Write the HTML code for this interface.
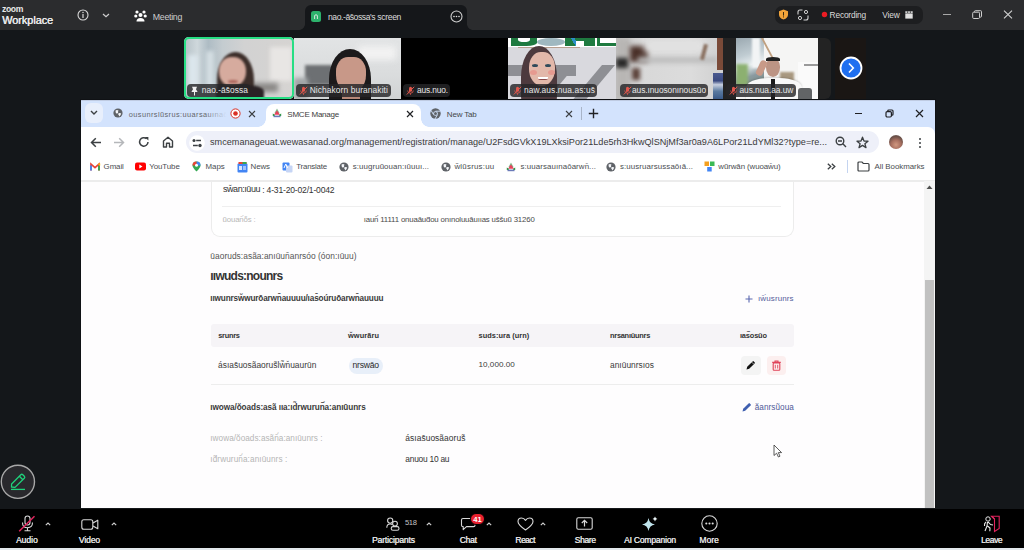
<!DOCTYPE html>
<html><head><meta charset="utf-8"><title>Zoom</title>
<style>
*{margin:0;padding:0;box-sizing:border-box}
html,body{width:1024px;height:550px;overflow:hidden;background:#14171a;font-family:"Liberation Sans",sans-serif}
.a{position:absolute}
.t{position:absolute;white-space:nowrap;font-family:"Liberation Sans",sans-serif}
svg.a{overflow:visible}
</style></head><body>
<div class="a" style="left:0px;top:0px;width:1024px;height:30px;background:#2b2c2e"></div>
<div class="a" style="left:0px;top:30px;width:1024px;height:478px;background:#14171a"></div>
<div class="t" style="left:2px;top:5.09px;font-size:8.6px;line-height:8.6px;color:#e8e8e8;font-weight:700;letter-spacing:-0.359px;">zoom</div>
<div class="t" style="left:2px;top:14.54px;font-size:10.9px;line-height:10.9px;color:#ececec;font-weight:400;letter-spacing:-0.028px;text-shadow:0.4px 0 0 #ececec;">Workplace</div>
<svg class="a" style="left:77px;top:9px;" width="12" height="12" viewBox="0 0 12 12"><circle cx="6" cy="6" r="5" fill="none" stroke="#d8d8d8" stroke-width="1.1"/><rect x="5.4" y="5" width="1.2" height="4" fill="#d8d8d8"/><circle cx="6" cy="3.4" r="0.75" fill="#d8d8d8"/></svg>
<svg class="a" style="left:102px;top:13px;" width="8" height="5" viewBox="0 0 8 5"><path d="M1 1 L4 3.8 L7 1" fill="none" stroke="#cfcfcf" stroke-width="1.2"/></svg>
<svg class="a" style="left:134px;top:10px;" width="13" height="12" viewBox="0 0 13 12"><circle cx="3" cy="2" r="1.6" fill="#fff"/><circle cx="10" cy="2" r="1.6" fill="#fff"/><circle cx="1.8" cy="6" r="1.6" fill="#fff"/><circle cx="11.2" cy="6" r="1.6" fill="#fff"/><circle cx="6.5" cy="5" r="2" fill="#fff"/><path d="M2.5 11.5 Q2.5 8 6.5 8 Q10.5 8 10.5 11.5 Z" fill="#fff"/></svg>
<div class="t" style="left:152.8px;top:13.02px;font-size:8.8px;line-height:8.8px;color:#cdcdcd;font-weight:400;letter-spacing:-0.300px;">Meeting</div>
<div class="a" style="left:305px;top:5px;width:162px;height:25px;background:#15171a;border-radius:6px 6px 0 0"></div>
<div class="a" style="left:299px;top:24px;width:6px;height:6px;background:radial-gradient(circle at 0 0,#2b2c2e 5.5px,#15171a 6.2px)"></div>
<div class="a" style="left:467px;top:24px;width:6px;height:6px;background:radial-gradient(circle at 6px 0,#2b2c2e 5.5px,#15171a 6.2px)"></div>
<div class="a" style="left:311px;top:11px;width:10px;height:11px;background:#2db26c;border-radius:2.5px"></div>
<svg class="a" style="left:311px;top:11px;" width="10" height="11" viewBox="0 0 10 11"><path d="M3.6 8 V5 Q3.6 3.8 5 3.8 Q6.4 3.8 6.4 5 V8" fill="none" stroke="#e8e8e8" stroke-width="0.9"/></svg>
<div class="t" style="left:328px;top:13.09px;font-size:8.6px;line-height:8.6px;color:#dcdcdc;font-weight:400;letter-spacing:-0.439px;">nao.-ās̄ossa</div>
<div class="t" style="left:370px;top:13.09px;font-size:8.6px;line-height:8.6px;color:#dcdcdc;font-weight:400;letter-spacing:-0.347px;">'s screen</div>
<svg class="a" style="left:450px;top:10px;" width="13" height="13" viewBox="0 0 13 13"><circle cx="6.5" cy="6.5" r="5.5" fill="none" stroke="#cfcfcf" stroke-width="1.1"/><circle cx="4" cy="6.5" r="0.8" fill="#ddd"/><circle cx="6.5" cy="6.5" r="0.8" fill="#ddd"/><circle cx="9" cy="6.5" r="0.8" fill="#ddd"/></svg>
<div class="a" style="left:775px;top:6px;width:148px;height:18px;background:#1d1e20;border-radius:7px"></div>
<svg class="a" style="left:778px;top:9px;" width="11" height="11" viewBox="0 0 11 11"><path d="M5.5 0.5 L10 2.3 V5.5 Q10 9 5.5 10.5 Q1 9 1 5.5 V2.3 Z" fill="#f2a43a"/><rect x="5" y="3" width="1" height="3.6" fill="#3a2a10"/><rect x="5" y="7.4" width="1" height="1" fill="#3a2a10"/></svg>
<svg class="a" style="left:797px;top:9px;" width="12" height="12" viewBox="0 0 12 12"><path d="M1 5.5 V3 Q1 1 3 1 H5.5 M6.5 11 H9 Q11 11 11 9 V6.5" fill="none" stroke="#d0d0d0" stroke-width="1.1"/><circle cx="9" cy="3" r="1.6" fill="none" stroke="#d0d0d0" stroke-width="1"/><circle cx="3" cy="9" r="1.6" fill="none" stroke="#d0d0d0" stroke-width="1"/></svg>
<svg class="a" style="left:821px;top:11px;" width="7" height="7" viewBox="0 0 7 7"><circle cx="3.5" cy="3.5" r="2.7" fill="#ec1c24"/></svg>
<div class="t" style="left:829.6px;top:10.76px;font-size:8.4px;line-height:8.4px;color:#dcdcdc;font-weight:400;letter-spacing:-0.199px;">Recording</div>
<div class="t" style="left:882.3px;top:10.76px;font-size:8.4px;line-height:8.4px;color:#dcdcdc;font-weight:400;letter-spacing:-0.204px;">View</div>
<svg class="a" style="left:904.5px;top:10.8px;" width="8" height="8" viewBox="0 0 8 8"><rect x="0.3" y="2.4" width="7.4" height="5.2" fill="#e0e0e0"/><rect x="0.3" y="0.3" width="7.4" height="1.6" fill="#e0e0e0"/><rect x="2.3" y="0.3" width="0.8" height="1.6" fill="#1d1e20"/><rect x="4.9" y="0.3" width="0.8" height="1.6" fill="#1d1e20"/></svg>
<div class="a" style="left:943px;top:13.5px;width:8px;height:1.0999999999999996px;background:#a8a8a8"></div>
<svg class="a" style="left:972px;top:10px;" width="11" height="9" viewBox="0 0 11 9"><rect x="0.7" y="2.2" width="6.8" height="6.3" rx="1" fill="none" stroke="#cfcfcf" stroke-width="1"/><path d="M2.5 2 V1.5 Q2.5 0.7 3.3 0.7 H8.7 Q9.5 0.7 9.5 1.5 V6.3 Q9.5 7.1 8.7 7.1 H8" fill="none" stroke="#cfcfcf" stroke-width="1"/></svg>
<svg class="a" style="left:1003px;top:10px;" width="10" height="9" viewBox="0 0 10 9"><path d="M1 0.7 L9 8.3 M9 0.7 L1 8.3" stroke="#d6d6d6" stroke-width="1.1"/></svg>
<div class="a" style="left:184px;top:37px;width:110px;height:62px;background:linear-gradient(90deg,#b9c4c8 0%,#d0d4d6 30%,#dcdcdc 55%,#d9d7d5 100%);border-radius:5px;overflow:hidden"></div>
<div class="a" style="left:184px;top:37px;width:110px;height:62px;border-radius:5px;overflow:hidden;background:linear-gradient(90deg,#b4c0c6 0%,#cfd8dc 12%,#aebcc4 22%,#c4ccd0 35%,#d2d2d2 55%,#d6d4d2 100%)"><div class="a" style="left:4px;top:18px;width:10px;height:36px;background:#dbe6ec;filter:blur(2px)"></div><div class="a" style="left:22px;top:14px;width:8px;height:38px;background:#d4dee2;filter:blur(2px)"></div><div class="a" style="left:86px;top:10px;width:22px;height:34px;background:#e8e6e4;filter:blur(2px)"></div><div class="a" style="left:68px;top:46px;width:26px;height:9px;background:#8a8886;filter:blur(2.5px)"></div><div class="a" style="left:33px;top:15px;width:37px;height:55px;background:#3c2e2a;border-radius:50% 50% 30% 30%;filter:blur(0.8px)"></div><div class="a" style="left:35px;top:20px;width:27px;height:30px;background:#d6ab9e;border-radius:45% 45% 50% 50%;filter:blur(0.8px)"></div><div class="a" style="left:44px;top:43px;width:10px;height:3px;background:#a86058;border-radius:50%;filter:blur(0.8px)"></div><div class="a" style="left:32px;top:48px;width:48px;height:16px;background:#2a2224;border-radius:40% 40% 0 0;filter:blur(1px)"></div></div>
<div class="a" style="left:184px;top:37px;width:110px;height:62px;border:2px solid #27de84;border-radius:5px"></div>
<div class="a" style="left:187px;top:84px;width:63px;height:12.5px;background:rgba(38,38,40,0.82);border-radius:4px"></div>
<svg class="a" style="left:190px;top:86px;" width="9" height="10" viewBox="0 0 9 10"><path d="M2 0.8 L7 0.8 L6 3.2 L7.6 6 H5 V9.5 H4 V6 H1.4 L3 3.2 Z" fill="#f0f0f0"/></svg>
<div class="t" style="left:201.7px;top:86.46px;font-size:8.4px;line-height:8.4px;color:#e8e8e8;font-weight:400;letter-spacing:0.061px;">nao.-ās̄ossa</div>
<div class="a" style="left:294px;top:38px;width:107px;height:61px;overflow:hidden;background:linear-gradient(180deg,#e2e4e5 0%,#dadcdd 60%,#d0d3d4 100%)"><div class="a" style="left:11px;top:27px;width:28px;height:20px;background:#6d7073;filter:blur(1.5px)"></div><div class="a" style="left:0px;top:40px;width:14px;height:21px;background:#a0a4a6;filter:blur(2px)"></div><div class="a" style="left:64px;top:8px;width:38px;height:14px;background:#f2f2f2;filter:blur(3px)"></div><div class="a" style="left:35px;top:11px;width:42px;height:60px;background:#1c1a1b;border-radius:50% 50% 15% 15%;filter:blur(0.6px)"></div><div class="a" style="left:42px;top:19px;width:30px;height:36px;background:#c89888;border-radius:40% 40% 50% 50%;filter:blur(0.6px)"></div><div class="a" style="left:48px;top:50px;width:18px;height:12px;background:#b88878;filter:blur(0.6px)"></div></div>
<div class="a" style="left:295.7px;top:83.5px;width:94.90000000000003px;height:13.5px;background:rgba(38,38,40,0.82);border-radius:4px"></div>
<svg class="a" style="left:298.7px;top:85.5px;" width="9" height="9" viewBox="0 0 9 9"><rect x="3" y="0.8" width="3" height="5" rx="1.5" fill="#e2574c"/><path d="M1.7 4.5 Q1.7 7.2 4.5 7.2 Q7.3 7.2 7.3 4.5 M4.5 7.2 V8.8" fill="none" stroke="#e2574c" stroke-width="0.8"/><path d="M0.8 8.5 L8.2 0.8" stroke="#e2574c" stroke-width="1"/></svg>
<div class="t" style="left:309.7px;top:85.96px;font-size:8.4px;line-height:8.4px;color:#e8e8e8;font-weight:400;letter-spacing:0.097px;">Nichakorn buranakiti</div>
<div class="a" style="left:401px;top:38px;width:107px;height:61px;background:#000"></div>
<div class="a" style="left:403px;top:84px;width:46.69999999999999px;height:13px;background:rgba(38,38,40,0.82);border-radius:4px"></div>
<svg class="a" style="left:406px;top:86px;" width="9" height="9" viewBox="0 0 9 9"><rect x="3" y="0.8" width="3" height="5" rx="1.5" fill="#e2574c"/><path d="M1.7 4.5 Q1.7 7.2 4.5 7.2 Q7.3 7.2 7.3 4.5 M4.5 7.2 V8.8" fill="none" stroke="#e2574c" stroke-width="0.8"/><path d="M0.8 8.5 L8.2 0.8" stroke="#e2574c" stroke-width="1"/></svg>
<div class="t" style="left:417px;top:86.46px;font-size:8.4px;line-height:8.4px;color:#e8e8e8;font-weight:400;letter-spacing:-0.143px;">aus.nuo.</div>
<div class="a" style="left:508px;top:38px;width:108px;height:61px;overflow:hidden;background:#d9d9de"><div class="a" style="left:0px;top:0px;width:108px;height:9px;background:#fff"></div><div class="a" style="left:3px;top:0px;width:26px;height:8px;background:#1e7a40;border-radius:0 0 40% 0"></div><div class="a" style="left:10px;top:0px;width:12px;height:4px;background:#fff;border-radius:0 0 50% 50%"></div><div class="a" style="left:29px;top:0px;width:28px;height:8px;background:#9fb8c0;border-radius:50%"></div><div class="a" style="left:57px;top:0px;width:30px;height:8px;background:linear-gradient(60deg,#1e7a40 30%,#2a8fc8 30%,#2a8fc8 40%,#1e7a40 40%)"></div><div class="a" style="left:68px;top:3px;width:8px;height:5px;background:#fff"></div><div class="a" style="left:89px;top:0px;width:19px;height:8px;background:#1e7a40"></div><div class="a" style="left:92px;top:0px;width:16px;height:5px;background:#fff"></div><div class="a" style="left:10px;top:9px;width:62px;height:1px;background:#b8a090"></div><div class="a" style="left:0px;top:27px;width:68px;height:11px;background:#8e8f94"></div><div class="a" style="left:54px;top:27px;width:14px;height:40px;background:#8e8f94;transform:skewX(-40deg);transform-origin:0 0"></div><div class="a" style="left:94px;top:27px;width:13px;height:40px;background:#8e8f94;transform:skewX(-40deg);transform-origin:0 0"></div><div class="a" style="left:13px;top:8px;width:36px;height:62px;background:#4d3a3e;border-radius:50% 50% 20% 20%"></div><div class="a" style="left:21px;top:14px;width:26px;height:34px;background:#e2b8aa;border-radius:45% 45% 50% 50%"></div><div class="a" style="left:22px;top:32px;width:7px;height:5px;background:#e69a90;border-radius:50%"></div><div class="a" style="left:40px;top:32px;width:7px;height:5px;background:#e69a90;border-radius:50%"></div><div class="a" style="left:24px;top:26px;width:6px;height:3px;background:#2f4a5a;border-radius:50%"></div><div class="a" style="left:37px;top:26px;width:6px;height:3px;background:#2f4a5a;border-radius:50%"></div><div class="a" style="left:30px;top:39px;width:10px;height:3px;background:#fff;border-radius:0 0 50% 50%;border-bottom:1px solid #8a4a4a"></div></div>
<div class="a" style="left:510px;top:84px;width:87px;height:13px;background:rgba(38,38,40,0.82);border-radius:4px"></div>
<svg class="a" style="left:513px;top:86px;" width="9" height="9" viewBox="0 0 9 9"><rect x="3" y="0.8" width="3" height="5" rx="1.5" fill="#e2574c"/><path d="M1.7 4.5 Q1.7 7.2 4.5 7.2 Q7.3 7.2 7.3 4.5 M4.5 7.2 V8.8" fill="none" stroke="#e2574c" stroke-width="0.8"/><path d="M0.8 8.5 L8.2 0.8" stroke="#e2574c" stroke-width="1"/></svg>
<div class="t" style="left:524px;top:86.46px;font-size:8.4px;line-height:8.4px;color:#e8e8e8;font-weight:400;letter-spacing:0.095px;">naw.aus.nua.as:us̄</div>
<div class="a" style="left:616px;top:38px;width:107px;height:61px;overflow:hidden;background:linear-gradient(90deg,#c4c4c4 0%,#d8d8d8 25%,#dcdcdc 70%,#d0d0d0 100%)"><div class="a" style="left:0px;top:0px;width:14px;height:61px;background:#b8b6b4;filter:blur(2px)"></div><div class="a" style="left:0px;top:20px;width:12px;height:10px;background:#2a2a2a;filter:blur(2px)"></div><div class="a" style="left:14px;top:8px;width:18px;height:16px;background:#4a3028;filter:blur(2.5px)"></div><div class="a" style="left:16px;top:30px;width:8px;height:12px;background:#5a4038;filter:blur(2px)"></div><div class="a" style="left:22px;top:19px;width:80px;height:6px;background:#bcbcbc;filter:blur(2.5px)"></div><div class="a" style="left:28px;top:2px;width:60px;height:12px;background:#e2e2e2;filter:blur(3px)"></div><div class="a" style="left:86px;top:6px;width:4px;height:16px;background:#8a7060;filter:blur(1.2px);transform:rotate(15deg)"></div><div class="a" style="left:101px;top:0px;width:6px;height:32px;background:#7a4a38;filter:blur(0.6px)"></div><div class="a" style="left:97px;top:35px;width:10px;height:26px;background:linear-gradient(180deg,#4a5a90 0%,#3a4a80 30%,#c8d0e0 45%,#5a7aa0 70%,#3a5a88 100%)"></div></div>
<div class="a" style="left:619.5px;top:84px;width:88.5px;height:13px;background:rgba(38,38,40,0.82);border-radius:4px"></div>
<svg class="a" style="left:622.5px;top:86px;" width="9" height="9" viewBox="0 0 9 9"><rect x="3" y="0.8" width="3" height="5" rx="1.5" fill="#e2574c"/><path d="M1.7 4.5 Q1.7 7.2 4.5 7.2 Q7.3 7.2 7.3 4.5 M4.5 7.2 V8.8" fill="none" stroke="#e2574c" stroke-width="0.8"/><path d="M0.8 8.5 L8.2 0.8" stroke="#e2574c" stroke-width="1"/></svg>
<div class="t" style="left:632px;top:86.46px;font-size:8.4px;line-height:8.4px;color:#e8e8e8;font-weight:400;letter-spacing:-0.080px;">aus.ınuosonınousūo</div>
<div class="a" style="left:723px;top:38px;width:108px;height:61px;background:#232323;border-radius:0 6px 6px 0"></div>
<div class="a" style="left:736px;top:38px;width:82px;height:61px;overflow:hidden;background:#f5f5f4"><div class="a" style="left:0px;top:0px;width:28px;height:48px;background:linear-gradient(160deg,#9aa8b0 0%,#c0ccd2 35%,#e8eef0 55%,#8a9aa0 75%,#7a8a80 100%)"></div><div class="a" style="left:0px;top:26px;width:12px;height:22px;background:#8cb070;filter:blur(1.5px)"></div><div class="a" style="left:16px;top:0px;width:8px;height:30px;background:#f2f4f5;filter:blur(1px)"></div><div class="a" style="left:25px;top:0px;width:2px;height:24px;background:#c0a080;transform:skewX(28deg);transform-origin:0 0"></div><div class="a" style="left:62px;top:24px;width:20px;height:37px;background:#fafafa"></div><div class="a" style="left:68px;top:26px;width:14px;height:2px;background:#9a9a9a"></div><div class="a" style="left:44px;top:34px;width:14px;height:18px;background:#a89880;filter:blur(0.8px)"></div><div class="a" style="left:10px;top:40px;width:56px;height:24px;background:#f8f8f8;border-radius:40% 40% 0 0;box-shadow:0 -1px 2px rgba(0,0,0,.15)"></div><div class="a" style="left:30px;top:20px;width:14px;height:19px;background:#bc9484;border-radius:45% 45% 50% 50%"></div><div class="a" style="left:30px;top:19px;width:14px;height:4px;background:#222;border-radius:50% 50% 0 0"></div><div class="a" style="left:22px;top:22px;width:7px;height:16px;background:#c89a88;transform:rotate(25deg);border-radius:3px"></div><div class="a" style="left:35px;top:41px;width:4px;height:20px;background:#1a1a1a"></div><div class="a" style="left:62px;top:50px;width:14px;height:11px;background:#626466;border-radius:3px 3px 0 0"></div></div>
<div class="a" style="left:725.5px;top:84px;width:70.5px;height:13px;background:rgba(38,38,40,0.82);border-radius:4px"></div>
<svg class="a" style="left:728.5px;top:86px;" width="9" height="9" viewBox="0 0 9 9"><rect x="3" y="0.8" width="3" height="5" rx="1.5" fill="#e2574c"/><path d="M1.7 4.5 Q1.7 7.2 4.5 7.2 Q7.3 7.2 7.3 4.5 M4.5 7.2 V8.8" fill="none" stroke="#e2574c" stroke-width="0.8"/><path d="M0.8 8.5 L8.2 0.8" stroke="#e2574c" stroke-width="1"/></svg>
<div class="t" style="left:739.5px;top:86.46px;font-size:8.4px;line-height:8.4px;color:#e8e8e8;font-weight:400;letter-spacing:-0.053px;">aus.nua.aa.uw</div>
<div class="a" style="left:835px;top:38px;width:31px;height:61px;background:#1a1614"></div>
<svg class="a" style="left:839px;top:56px;" width="24" height="24" viewBox="0 0 24 24"><circle cx="12" cy="12" r="10.5" fill="#1f6ff0" stroke="#fff" stroke-width="1.8"/><path d="M10 7.5 L14.3 12 L10 16.5" fill="none" stroke="#fff" stroke-width="1.6"/></svg>
<div class="a" style="left:80px;top:99px;width:856px;height:409px;background:#101215"></div>
<div class="a" style="left:81px;top:100px;width:854px;height:34px;background:#d3e3fd"></div>
<div class="a" style="left:81px;top:100px;width:854px;height:1px;background:#bfcbe2"></div>
<div class="a" style="left:85px;top:103px;width:18px;height:20px;background:#e8effc;border-radius:6px"></div>
<svg class="a" style="left:90px;top:110px;" width="8" height="5" viewBox="0 0 8 5"><path d="M1 1 L4 4 L7 1" fill="none" stroke="#3c4043" stroke-width="1.4"/></svg>
<svg class="a" style="left:113px;top:108px;" width="10" height="10" viewBox="0 0 10 10"><g transform="scale(1.0)"><circle cx="5" cy="5" r="4.6" fill="#5f6368"/><path d="M2.6 2.4 Q4.4 1.4 5.6 2.8 Q4.4 3.8 5.2 4.8 Q4.6 5.8 3.4 5.4 Q2.2 4.2 2.6 2.4 Z M5.4 5.2 Q7.4 4.6 8.2 5.6 Q7.8 7.6 6 8.4 Q6.2 7 5.2 6.4 Z" fill="#f4f6fa"/></g></svg>
<div class="t" style="left:128.8px;top:110.51px;font-size:7.4px;line-height:7.4px;color:#63666a;font-weight:400;letter-spacing:0.402px;">ousunrslũsrus:uuarsauınaō</div>
<div class="a" style="left:205px;top:105px;width:24px;height:17px;background:linear-gradient(90deg,rgba(211,227,253,0) 0%,#d3e3fd 90%)"></div>
<svg class="a" style="left:230px;top:108px;" width="11" height="11" viewBox="0 0 11 11"><circle cx="5.5" cy="5.5" r="4.6" fill="#fff" stroke="#d93025" stroke-width="1"/><circle cx="5.5" cy="5.5" r="2.3" fill="#d93025"/></svg>
<svg class="a" style="left:247.5px;top:109.5px;" width="8" height="8" viewBox="0 0 8 8"><path d="M1 1 L7 7 M7 1 L1 7" stroke="#3c4043" stroke-width="1.1"/></svg>
<div class="a" style="left:266px;top:104px;width:155px;height:23px;background:#fff;border-radius:8px 8px 0 0"></div>
<div class="a" style="left:258px;top:119px;width:8px;height:8px;background:radial-gradient(circle at 0 0,#d3e3fd 7.5px,#fff 8px)"></div>
<div class="a" style="left:421px;top:119px;width:8px;height:8px;background:radial-gradient(circle at 8px 0,#d3e3fd 7.5px,#fff 8px)"></div>
<svg class="a" style="left:271.6px;top:108px;" width="10" height="10" viewBox="0 0 10 10"><path d="M5 0.5 L7.5 5 H2.5 Z" fill="#4a9a5a" opacity=".7"/><path d="M5 2.5 L8 6.8 H2 Z" fill="#e8405a"/><path d="M0.8 5.5 L2.8 6.8 V8 H0.8 Z M9.2 5.5 L7.2 6.8 V8 H9.2 Z" fill="#2a9a40"/><rect x="1.5" y="7.6" width="7" height="1.6" fill="#6a7ab8"/></svg>
<div class="t" style="left:287.3px;top:110.80px;font-size:8px;line-height:8px;color:#3c3c3c;font-weight:400;letter-spacing:-0.232px;">SMCE Manage</div>
<svg class="a" style="left:406px;top:109.5px;" width="8" height="8" viewBox="0 0 8 8"><path d="M1 1 L7 7 M7 1 L1 7" stroke="#202124" stroke-width="1.2"/></svg>
<svg class="a" style="left:430px;top:108px;" width="11" height="11" viewBox="0 0 11 11"><circle cx="5.5" cy="5.5" r="5.2" fill="#5f6368"/><circle cx="5.5" cy="5.5" r="2.3" fill="#d3e3fd"/><circle cx="5.5" cy="5.5" r="1.5" fill="#5f6368"/><path d="M5.5 3.2 H10.5" stroke="#d3e3fd" stroke-width="0.9"/><path d="M3.5 6.6 L1 2.3" stroke="#d3e3fd" stroke-width="0.9"/><path d="M7.5 6.6 L5 11" stroke="#d3e3fd" stroke-width="0.9"/></svg>
<div class="t" style="left:446.8px;top:110.80px;font-size:8px;line-height:8px;color:#45474a;font-weight:400;letter-spacing:-0.183px;">New Tab</div>
<svg class="a" style="left:565px;top:109.5px;" width="8" height="8" viewBox="0 0 8 8"><path d="M1 1 L7 7 M7 1 L1 7" stroke="#3c4043" stroke-width="1.1"/></svg>
<div class="a" style="left:581px;top:107px;width:1px;height:13px;background:#a8b4c8"></div>
<svg class="a" style="left:588px;top:108px;" width="11" height="11" viewBox="0 0 11 11"><path d="M5.5 0.8 V10.2 M0.8 5.5 H10.2" stroke="#202124" stroke-width="1.4"/></svg>
<div class="a" style="left:855px;top:113px;width:7px;height:1.2999999999999972px;background:#202124"></div>
<svg class="a" style="left:884.5px;top:108.5px;" width="9" height="9" viewBox="0 0 9 9"><rect x="1" y="2.6" width="5.4" height="5.4" rx="1.2" fill="none" stroke="#202124" stroke-width="1.2"/><path d="M2.8 2.4 V2 Q2.8 1 3.8 1 H7 Q8 1 8 2 V5.2 Q8 6.2 7 6.2 H6.6" fill="none" stroke="#202124" stroke-width="1.2"/></svg>
<svg class="a" style="left:915px;top:109px;" width="9" height="9" viewBox="0 0 9 9"><path d="M1 1 L8 8 M8 1 L1 8" stroke="#202124" stroke-width="1.2"/></svg>
<div class="a" style="left:81px;top:127px;width:854px;height:53px;background:#fff;border-radius:0 7px 0 0"></div>
<svg class="a" style="left:90px;top:137px;" width="12" height="11" viewBox="0 0 12 11"><path d="M11 5.5 H1.8 M5.8 1.2 L1.5 5.5 L5.8 9.8" fill="none" stroke="#3c4043" stroke-width="1.5"/></svg>
<svg class="a" style="left:113px;top:137px;" width="12" height="11" viewBox="0 0 12 11"><path d="M1 5.5 H10.2 M6.2 1.2 L10.5 5.5 L6.2 9.8" fill="none" stroke="#b5b7ba" stroke-width="1.5"/></svg>
<svg class="a" style="left:138px;top:136px;" width="12" height="12" viewBox="0 0 12 12"><path d="M10 6 A4.2 4.2 0 1 1 8.6 2.8" fill="none" stroke="#3c4043" stroke-width="1.5"/><path d="M6.8 1 H10.4 V4.6 Z" fill="#3c4043"/></svg>
<svg class="a" style="left:161.5px;top:136px;" width="12" height="12" viewBox="0 0 12 12"><path d="M1.5 11 V5 L6 1.2 L10.5 5 V11 H7.5 V7.2 H4.5 V11 Z" fill="none" stroke="#3c4043" stroke-width="1.4" stroke-linejoin="round"/></svg>
<div class="a" style="left:185.5px;top:131px;width:693.0px;height:22px;background:#eef0f9;border-radius:11px"></div>
<svg class="a" style="left:188.5px;top:134.5px;" width="16" height="16" viewBox="0 0 16 16"><circle cx="8" cy="8" r="7.8" fill="#fff"/><path d="M7.2 5.5 H12 M4 10.5 H8.8" stroke="#3c4043" stroke-width="1.4"/><circle cx="5" cy="5.5" r="1.5" fill="#3c4043"/><circle cx="11" cy="10.5" r="1.7" fill="#3c4043"/></svg>
<div class="t" style="left:210px;top:137.87px;font-size:9.1px;line-height:9.1px;color:#3a3a3a;font-weight:400;letter-spacing:0.020px;">smcemanageuat.wewasanad.org/management/registration/manage/U2FsdGVkX19LXksiPor21Lde5rh3HkwQlSNjMf3ar0a9A6LPor21LdYMl32?type=re...</div>
<svg class="a" style="left:835px;top:136px;" width="12" height="12" viewBox="0 0 12 12"><circle cx="5" cy="5" r="3.8" fill="none" stroke="#3c4043" stroke-width="1.4"/><path d="M3 5 H7 M7.8 7.8 L11 11" stroke="#3c4043" stroke-width="1.4"/></svg>
<svg class="a" style="left:856px;top:135.5px;" width="13" height="13" viewBox="0 0 13 13"><path d="M6.5 1.2 L8 5 L12 5.2 L8.9 7.7 L10 11.6 L6.5 9.4 L3 11.6 L4.1 7.7 L1 5.2 L5 5 Z" fill="none" stroke="#3c4043" stroke-width="1.3" stroke-linejoin="round"/></svg>
<div class="a" style="left:889px;top:135px;width:14px;height:14px;border-radius:50%;background:radial-gradient(circle at 50% 70%,#d09880 0%,#a87060 40%,#6a5048 70%,#8a8080 100%)"></div>
<div class="a" style="left:918.8px;top:137.5px;width:2.0px;height:2.0px;background:#3c4043;border-radius:50%"></div>
<div class="a" style="left:918.8px;top:141.5px;width:2.0px;height:2.0px;background:#3c4043;border-radius:50%"></div>
<div class="a" style="left:918.8px;top:145.5px;width:2.0px;height:2.0px;background:#3c4043;border-radius:50%"></div>
<svg class="a" style="left:89.5px;top:162.5px;" width="10" height="8" viewBox="0 0 10 8"><path d="M1 7.5 V1.2 L5 4.6 L9 1.2 V7.5" fill="none" stroke="#ea4335" stroke-width="1.7"/><path d="M1 7.6 V2.5" stroke="#4285f4" stroke-width="1.8"/><path d="M9 7.6 V2.5" stroke="#34a853" stroke-width="1.8"/><path d="M8.2 1.2 L9.6 1.2 V2.6" stroke="#fbbc04" stroke-width="1.2" fill="none"/></svg>
<div class="t" style="left:103.6px;top:162.88px;font-size:7.9px;line-height:7.9px;color:#4a4d51;font-weight:400;letter-spacing:-0.102px;">Gmail</div>
<svg class="a" style="left:134.5px;top:162px;" width="11" height="9" viewBox="0 0 11 9"><rect x="0" y="0.5" width="11" height="8" rx="2" fill="#f00"/><path d="M4.3 2.5 L7.5 4.5 L4.3 6.5 Z" fill="#fff"/></svg>
<div class="t" style="left:149.3px;top:162.88px;font-size:7.9px;line-height:7.9px;color:#4a4d51;font-weight:400;letter-spacing:-0.088px;">YouTube</div>
<svg class="a" style="left:192px;top:161px;" width="9" height="11" viewBox="0 0 9 11"><path d="M4.5 0.5 Q8.5 0.5 8.5 4.5 Q8.5 6.5 4.5 10.5 Q0.5 6.5 0.5 4.5 Q0.5 0.5 4.5 0.5 Z" fill="#34a853"/><path d="M4.5 0.5 Q8.5 0.5 8.5 4.5 L4.5 4.5 Z" fill="#4285f4"/><path d="M0.5 4.5 Q0.5 0.5 4.5 0.5 L4.5 4.5 Z" fill="#ea4335"/><circle cx="4.5" cy="4.3" r="1.5" fill="#fff"/></svg>
<div class="t" style="left:205.6px;top:162.88px;font-size:7.9px;line-height:7.9px;color:#4a4d51;font-weight:400;letter-spacing:-0.049px;">Maps</div>
<svg class="a" style="left:236.5px;top:161.5px;" width="11" height="11" viewBox="0 0 11 11"><rect x="0.5" y="1.5" width="10" height="9" rx="1" fill="#4285f4"/><rect x="1.5" y="0" width="8" height="2" fill="#ea4335"/><rect x="5.5" y="0" width="4" height="2" fill="#34a853"/><rect x="2" y="4" width="3" height="4" fill="#fff" opacity=".8"/><rect x="6" y="4.5" width="3" height="1" fill="#fff"/><rect x="6" y="6.5" width="3" height="1" fill="#fff"/></svg>
<div class="t" style="left:250.6px;top:162.88px;font-size:7.9px;line-height:7.9px;color:#4a4d51;font-weight:400;letter-spacing:-0.134px;">News</div>
<svg class="a" style="left:281.5px;top:161.5px;" width="11" height="11" viewBox="0 0 11 11"><rect x="0.5" y="0.5" width="7" height="8" rx="1" fill="#4285f4"/><rect x="4" y="3.5" width="6.5" height="7" rx="1" fill="#c6d5f5"/><path d="M2 6 L3.8 2 L5.6 6" fill="none" stroke="#fff" stroke-width="1"/></svg>
<div class="t" style="left:296.2px;top:162.88px;font-size:7.9px;line-height:7.9px;color:#4a4d51;font-weight:400;letter-spacing:-0.201px;">Translate</div>
<svg class="a" style="left:339px;top:161.5px;" width="10" height="10" viewBox="0 0 10 10"><g transform="scale(1.0)"><circle cx="5" cy="5" r="4.6" fill="#5f6368"/><path d="M2.6 2.4 Q4.4 1.4 5.6 2.8 Q4.4 3.8 5.2 4.8 Q4.6 5.8 3.4 5.4 Q2.2 4.2 2.6 2.4 Z M5.4 5.2 Q7.4 4.6 8.2 5.6 Q7.8 7.6 6 8.4 Q6.2 7 5.2 6.4 Z" fill="#f4f6fa"/></g></svg>
<div class="t" style="left:352.8px;top:162.88px;font-size:7.9px;line-height:7.9px;color:#4a4d51;font-weight:400;letter-spacing:0.076px;">s:uugruũouan:ıūuuı...</div>
<svg class="a" style="left:441.2px;top:161.5px;" width="10" height="10" viewBox="0 0 10 10"><g transform="scale(1.0)"><circle cx="5" cy="5" r="4.6" fill="#5f6368"/><path d="M2.6 2.4 Q4.4 1.4 5.6 2.8 Q4.4 3.8 5.2 4.8 Q4.6 5.8 3.4 5.4 Q2.2 4.2 2.6 2.4 Z M5.4 5.2 Q7.4 4.6 8.2 5.6 Q7.8 7.6 6 8.4 Q6.2 7 5.2 6.4 Z" fill="#f4f6fa"/></g></svg>
<div class="t" style="left:454.4px;top:162.88px;font-size:7.9px;line-height:7.9px;color:#4a4d51;font-weight:400;letter-spacing:0.238px;">w̃lũsrus:uu</div>
<svg class="a" style="left:505.7px;top:161.5px;" width="10" height="10" viewBox="0 0 10 10"><path d="M5 0.5 L7.5 5 H2.5 Z" fill="#4a9a5a" opacity=".7"/><path d="M5 2.5 L8 6.8 H2 Z" fill="#e8405a"/><path d="M0.8 5.5 L2.8 6.8 V8 H0.8 Z M9.2 5.5 L7.2 6.8 V8 H9.2 Z" fill="#2a9a40"/><rect x="1.5" y="7.6" width="7" height="1.6" fill="#6a7ab8"/></svg>
<div class="t" style="left:520.4px;top:162.88px;font-size:7.9px;line-height:7.9px;color:#4a4d51;font-weight:400;letter-spacing:0.095px;">s:uuarsauınaōarwn̄...</div>
<svg class="a" style="left:605.5px;top:161.5px;" width="10" height="10" viewBox="0 0 10 10"><g transform="scale(1.0)"><circle cx="5" cy="5" r="4.6" fill="#5f6368"/><path d="M2.6 2.4 Q4.4 1.4 5.6 2.8 Q4.4 3.8 5.2 4.8 Q4.6 5.8 3.4 5.4 Q2.2 4.2 2.6 2.4 Z M5.4 5.2 Q7.4 4.6 8.2 5.6 Q7.8 7.6 6 8.4 Q6.2 7 5.2 6.4 Z" fill="#f4f6fa"/></g></svg>
<div class="t" style="left:620px;top:162.88px;font-size:7.9px;line-height:7.9px;color:#4a4d51;font-weight:400;letter-spacing:0.097px;">s:uusruarsussaōıă...</div>
<svg class="a" style="left:704px;top:161px;" width="11" height="11" viewBox="0 0 11 11"><rect x="0.5" y="0.5" width="4.5" height="4.5" fill="#f4a020"/><rect x="6" y="0.5" width="4.5" height="4.5" fill="#3cba54"/><rect x="3.2" y="6" width="4.5" height="4.5" fill="#4285f4"/></svg>
<div class="t" style="left:718.3px;top:162.88px;font-size:7.9px;line-height:7.9px;color:#4a4d51;font-weight:400;letter-spacing:-0.093px;">wũrwăn (wuoaw̄u)</div>
<svg class="a" style="left:827px;top:163px;" width="9" height="7" viewBox="0 0 9 7"><path d="M0.8 0.8 L3.8 3.5 L0.8 6.2 M4.8 0.8 L7.8 3.5 L4.8 6.2" fill="none" stroke="#3c4043" stroke-width="1.3"/></svg>
<div class="a" style="left:846.5px;top:160px;width:1.0px;height:13px;background:#c4d4f0"></div>
<svg class="a" style="left:857px;top:161px;" width="13" height="11" viewBox="0 0 13 11"><path d="M1 2 Q1 1 2 1 H5 L6.3 2.5 H11 Q12 2.5 12 3.5 V9 Q12 10 11 10 H2 Q1 10 1 9 Z" fill="none" stroke="#3c4043" stroke-width="1.2"/></svg>
<div class="t" style="left:874.5px;top:162.88px;font-size:7.9px;line-height:7.9px;color:#4a4d51;font-weight:400;letter-spacing:-0.034px;">All Bookmarks</div>
<div class="a" style="left:81px;top:180px;width:854px;height:1px;background:#ececec"></div>
<div class="a" style="left:81px;top:181px;width:843px;height:327px;background:#fefdfe"></div>
<div class="a" style="left:924px;top:181px;width:11px;height:327px;background:#f4f4f4"></div>
<svg class="a" style="left:925px;top:183px;" width="9" height="8" viewBox="0 0 9 8"><path d="M1.5 6 L4.5 2.5 L7.5 6 Z" fill="#505050"/></svg>
<div class="a" style="left:925px;top:280px;width:9px;height:228px;background:#c1c1c1"></div>
<div class="a" style="left:210.5px;top:181px;width:583.5px;height:55.5px;background:#fff;border:1px solid #ececec;border-top:none;border-radius:0 0 9px 9px"></div>
<div class="a" style="left:81px;top:181px;width:843px;height:0.5px;background:#ececec"></div>
<div class="t" style="left:223px;top:185.35px;font-size:9px;line-height:9px;color:#333;font-weight:400;letter-spacing:-0.448px;">sw̆an:ıūuu</div>
<div class="t" style="left:262.3px;top:185.78px;font-size:8.5px;line-height:8.5px;color:#333;font-weight:400;">:</div>
<div class="t" style="left:266.6px;top:185.69px;font-size:8.6px;line-height:8.6px;color:#333;font-weight:400;letter-spacing:-0.200px;">4-31-20-02/1-0042</div>
<div class="a" style="left:222px;top:206px;width:559px;height:1px;background:#efefef"></div>
<div class="t" style="left:222.6px;top:215.87px;font-size:7.8px;line-height:7.8px;color:#b8b8b8;font-weight:400;letter-spacing:-0.150px;">ũouan̄́ŏ̃s :</div>
<div class="t" style="left:363.7px;top:215.87px;font-size:7.8px;line-height:7.8px;color:#4a4a4a;font-weight:400;letter-spacing:-0.152px;">ıaun̄́ 11111 onuaāud̃ou onınoluuāuııas us̄s̆uũ 31260</div>
<div class="t" style="left:210.3px;top:252.06px;font-size:8.4px;line-height:8.4px;color:#555;font-weight:400;letter-spacing:0.041px;">ūaoruds:asãa:anıūun̄anrsóo (óon:ıūuu)</div>
<div class="t" style="left:210.3px;top:269.60px;font-size:12px;line-height:12px;color:#333;font-weight:700;letter-spacing:-0.762px;">ııwuds:nounrs</div>
<div class="t" style="left:210.3px;top:294.53px;font-size:8.2px;line-height:8.2px;color:#3a3a3a;font-weight:700;letter-spacing:-0.146px;">ııwunrsw̆wurōarwn̄auuuu/ıas̄oúruōarwn̄auuuu</div>
<svg class="a" style="left:745px;top:295px;" width="8" height="8" viewBox="0 0 8 8"><path d="M4 0.5 V7.5 M0.5 4 H7.5" stroke="#5a68b0" stroke-width="1.1"/></svg>
<div class="t" style="left:758px;top:295.20px;font-size:8px;line-height:8px;color:#56609c;font-weight:400;letter-spacing:0.113px;">ıw̄́usrunrs</div>
<div class="a" style="left:211px;top:324px;width:583px;height:23px;background:#f6f4f7;border-radius:3px"></div>
<div class="t" style="left:218.2px;top:332.01px;font-size:7.4px;line-height:7.4px;color:#333;font-weight:700;letter-spacing:-0.269px;">srunrs</div>
<div class="t" style="left:348px;top:332.01px;font-size:7.4px;line-height:7.4px;color:#333;font-weight:700;letter-spacing:0.087px;">w̆wurãru</div>
<div class="t" style="left:478.6px;top:332.01px;font-size:7.4px;line-height:7.4px;color:#333;font-weight:700;letter-spacing:0.043px;">suds:ura (urn)</div>
<div class="t" style="left:610px;top:332.01px;font-size:7.4px;line-height:7.4px;color:#333;font-weight:700;letter-spacing:-0.247px;">nrsanıūunrs</div>
<div class="t" style="left:739.9px;top:332.01px;font-size:7.4px;line-height:7.4px;color:#333;font-weight:700;letter-spacing:-0.134px;">ıas̄́osūo</div>
<div class="t" style="left:218px;top:360.86px;font-size:8.4px;line-height:8.4px;color:#3a3a3a;font-weight:400;letter-spacing:0.027px;">ásıas̄uosãaorus̃lw̃n̆uaurūn</div>
<div class="a" style="left:348.7px;top:357.5px;width:34.0px;height:16.100000000000023px;background:#e8eff9;border-radius:8px"></div>
<div class="t" style="left:352.5px;top:360.99px;font-size:8.6px;line-height:8.6px;color:#2a2a2a;font-weight:400;letter-spacing:-0.217px;">nrswāo</div>
<div class="t" style="left:478.6px;top:361.12px;font-size:8.1px;line-height:8.1px;color:#3a3a3a;font-weight:400;letter-spacing:0.009px;">10,000.00</div>
<div class="t" style="left:610px;top:360.86px;font-size:8.4px;line-height:8.4px;color:#3a3a3a;font-weight:400;letter-spacing:0.021px;">anıūunrsıos</div>
<div class="a" style="left:740.5px;top:356px;width:20.0px;height:19px;background:#f4f4f4;border-radius:4px"></div>
<svg class="a" style="left:745px;top:360px;" width="11" height="11" viewBox="0 0 11 11"><path d="M1.5 9.5 L2.2 6.8 L7.6 1.4 Q8.2 0.8 8.8 1.4 L9.6 2.2 Q10.2 2.8 9.6 3.4 L4.2 8.8 Z" fill="#111"/><path d="M6.8 2.2 L8.8 4.2" stroke="#f4f4f4" stroke-width="0.7"/></svg>
<div class="a" style="left:767px;top:356px;width:19px;height:19px;background:#fcefef;border-radius:4px"></div>
<svg class="a" style="left:771px;top:360px;" width="11" height="11" viewBox="0 0 11 11"><rect x="2.2" y="3" width="6.6" height="7.3" rx="0.8" fill="none" stroke="#e0435a" stroke-width="1.1"/><path d="M1.2 2.4 H9.8 M4 2.2 V1 H7 V2.2" fill="none" stroke="#e0435a" stroke-width="1.1"/><path d="M4.3 4.8 V8.5 M6.7 4.8 V8.5" stroke="#e0435a" stroke-width="0.9"/></svg>
<div class="a" style="left:211px;top:383.5px;width:583px;height:1.0px;background:#ededed"></div>
<div class="t" style="left:210.3px;top:404.23px;font-size:8.2px;line-height:8.2px;color:#3a3a3a;font-weight:700;letter-spacing:-0.077px;">ıwowa/ŏoads:asã ııa:ıd̃rwurun̄́a:anıūunrs</div>
<svg class="a" style="left:740.5px;top:402px;" width="11" height="11" viewBox="0 0 11 11"><path d="M1.5 9.5 L2.2 6.8 L7.6 1.4 Q8.2 0.8 8.8 1.4 L9.6 2.2 Q10.2 2.8 9.6 3.4 L4.2 8.8 Z" fill="#3f5fb0"/></svg>
<div class="t" style="left:754.7px;top:404.23px;font-size:8.2px;line-height:8.2px;color:#4f5a98;font-weight:400;letter-spacing:0.055px;">ăanrsũoua</div>
<div class="t" style="left:210.3px;top:434.63px;font-size:8.2px;line-height:8.2px;color:#b5b5b5;font-weight:400;letter-spacing:0.044px;">ıwowa/ŏoads:asãn̄́a:anıūunrs :</div>
<div class="t" style="left:405.3px;top:434.46px;font-size:8.4px;line-height:8.4px;color:#333;font-weight:400;letter-spacing:0.069px;">ásıas̄uosãaorus̃</div>
<div class="t" style="left:210.3px;top:455.63px;font-size:8.2px;line-height:8.2px;color:#b5b5b5;font-weight:400;letter-spacing:0.100px;">ıd̃rwurun̄́a:anıūunrs :</div>
<div class="t" style="left:405.3px;top:455.46px;font-size:8.4px;line-height:8.4px;color:#333;font-weight:400;letter-spacing:-0.234px;">anuou 10 au</div>
<svg class="a" style="left:773px;top:444px;" width="9" height="14" viewBox="0 0 9 14"><path d="M1 1 V11.5 L3.6 9.2 L5.4 13 L7 12.2 L5.3 8.6 H8.6 Z" fill="#fff" stroke="#333" stroke-width="0.8" stroke-linejoin="round"/></svg>
<svg class="a" style="left:0px;top:464px;" width="36" height="36" viewBox="0 0 36 36"><circle cx="17.9" cy="17.8" r="16.6" fill="#29292d" stroke="#a8a8a8" stroke-width="1.4"/><path d="M11.5 23 L11.6 20 L20.8 10.8 Q21.8 9.8 22.8 10.8 L24.3 12.3 Q25.3 13.3 24.3 14.3 L15 23.4 Z M19.4 12.3 L22.8 15.7" fill="none" stroke="#1fd17a" stroke-width="1.3" stroke-linejoin="round"/><path d="M11 25.4 H25" stroke="#1fd17a" stroke-width="1.3"/></svg>
<div class="a" style="left:0px;top:508.5px;width:1024px;height:39.5px;background:#000"></div>
<div class="a" style="left:0px;top:548px;width:1024px;height:2px;background:#e3e8ec"></div>
<svg class="a" style="left:18px;top:515px;" width="18" height="18" viewBox="0 0 18 18"><rect x="7" y="1" width="5" height="9" rx="2.5" fill="none" stroke="#d8d8d8" stroke-width="1.1"/><path d="M4.5 7.5 Q4.5 12.8 9.5 12.8 Q14.5 12.8 14.5 7.5 M9.5 12.8 V15.6 M6.5 15.8 H12.5" fill="none" stroke="#d8d8d8" stroke-width="1.1"/><path d="M1.2 16.2 L16.5 1.2" stroke="#e0245e" stroke-width="1.5"/></svg>
<svg class="a" style="left:45px;top:522px;" width="6" height="4" viewBox="0 0 6 4"><path d="M0.8 3.2 L3 1 L5.2 3.2" fill="none" stroke="#d0d0d0" stroke-width="1.1"/></svg>
<div class="t" style="left:15.9px;top:535.77px;font-size:8.5px;line-height:8.5px;color:#e2e2e2;font-weight:400;letter-spacing:0.010px;text-shadow:0.3px 0 0 #e2e2e2;">Audio</div>
<svg class="a" style="left:80.5px;top:518.5px;" width="18" height="11" viewBox="0 0 18 11"><rect x="0.8" y="0.8" width="11" height="9.4" rx="2" fill="none" stroke="#d8d8d8" stroke-width="1.1"/><path d="M12 4 L16.8 1.2 V9.8 L12 7" fill="none" stroke="#d8d8d8" stroke-width="1.1" stroke-linejoin="round"/></svg>
<svg class="a" style="left:111.2px;top:522px;" width="6" height="4" viewBox="0 0 6 4"><path d="M0.8 3.2 L3 1 L5.2 3.2" fill="none" stroke="#d0d0d0" stroke-width="1.1"/></svg>
<div class="t" style="left:78.7px;top:535.77px;font-size:8.5px;line-height:8.5px;color:#e2e2e2;font-weight:400;letter-spacing:-0.059px;text-shadow:0.3px 0 0 #e2e2e2;">Video</div>
<svg class="a" style="left:386px;top:517px;" width="14" height="14" viewBox="0 0 14 14"><circle cx="4.2" cy="3.6" r="2.6" fill="none" stroke="#d8d8d8" stroke-width="1.1"/><path d="M0.8 10.8 Q0.8 7 4.2 7 Q5.6 7 6.4 7.6" fill="none" stroke="#d8d8d8" stroke-width="1.1"/><circle cx="9" cy="6.6" r="2.4" fill="none" stroke="#d8d8d8" stroke-width="1.1"/><rect x="5.2" y="9.6" width="7.8" height="3.6" rx="1.8" fill="none" stroke="#d8d8d8" stroke-width="1.1"/></svg>
<div class="t" style="left:405px;top:519.04px;font-size:7.6px;line-height:7.6px;color:#c4c4c4;font-weight:400;letter-spacing:-0.357px;">518</div>
<svg class="a" style="left:425.8px;top:522px;" width="6" height="4" viewBox="0 0 6 4"><path d="M0.8 3.2 L3 1 L5.2 3.2" fill="none" stroke="#d0d0d0" stroke-width="1.1"/></svg>
<div class="t" style="left:372px;top:535.77px;font-size:8.5px;line-height:8.5px;color:#e2e2e2;font-weight:400;letter-spacing:-0.143px;text-shadow:0.3px 0 0 #e2e2e2;">Participants</div>
<svg class="a" style="left:459.5px;top:517px;" width="17" height="14" viewBox="0 0 17 14"><path d="M3 1.5 H13.5 Q15 1.5 15 3 V8.2 Q15 9.6 13.5 9.6 H6.5 L3.2 12.6 V9.6 Q1.5 9.6 1.5 8.2 V3 Q1.5 1.5 3 1.5 Z" fill="none" stroke="#d8d8d8" stroke-width="1.1" stroke-linejoin="round"/></svg>
<div class="a" style="left:469.5px;top:512.8px;width:15.800000000000011px;height:12.400000000000091px;background:#e8202e;border-radius:6.5px;border:1px solid #000"></div>
<div class="t" style="left:473.2px;top:515.84px;font-size:7.6px;line-height:7.6px;color:#fff;font-weight:700;letter-spacing:0.073px;">41</div>
<svg class="a" style="left:486.3px;top:522px;" width="6" height="4" viewBox="0 0 6 4"><path d="M0.8 3.2 L3 1 L5.2 3.2" fill="none" stroke="#d0d0d0" stroke-width="1.1"/></svg>
<div class="t" style="left:459.6px;top:535.77px;font-size:8.5px;line-height:8.5px;color:#e2e2e2;font-weight:400;letter-spacing:-0.242px;text-shadow:0.3px 0 0 #e2e2e2;">Chat</div>
<svg class="a" style="left:516.5px;top:517px;" width="17" height="14" viewBox="0 0 17 14"><path d="M8.5 13 Q1 7.8 1 4.5 Q1 1 4.5 1 Q7 1 8.5 3.4 Q10 1 12.5 1 Q16 1 16 4.5 Q16 7.8 8.5 13 Z" fill="none" stroke="#d8d8d8" stroke-width="1.1" stroke-linejoin="round"/></svg>
<svg class="a" style="left:540.2px;top:522px;" width="6" height="4" viewBox="0 0 6 4"><path d="M0.8 3.2 L3 1 L5.2 3.2" fill="none" stroke="#d0d0d0" stroke-width="1.1"/></svg>
<div class="t" style="left:515.3px;top:535.77px;font-size:8.5px;line-height:8.5px;color:#e2e2e2;font-weight:400;letter-spacing:-0.544px;text-shadow:0.3px 0 0 #e2e2e2;">React</div>
<svg class="a" style="left:576px;top:517px;" width="17" height="13" viewBox="0 0 17 13"><rect x="0.8" y="0.8" width="15.4" height="11.4" rx="1.5" fill="none" stroke="#d8d8d8" stroke-width="1.1"/><path d="M8.5 9.5 V3.5 M5.8 6 L8.5 3.3 L11.2 6" fill="none" stroke="#d8d8d8" stroke-width="1.2"/></svg>
<div class="t" style="left:574.6px;top:535.77px;font-size:8.5px;line-height:8.5px;color:#e2e2e2;font-weight:400;letter-spacing:-0.317px;text-shadow:0.3px 0 0 #e2e2e2;">Share</div>
<svg class="a" style="left:641px;top:515.5px;" width="17" height="16" viewBox="0 0 17 16"><path d="M7.5 2 Q8.4 7.6 14 8.5 Q8.4 9.4 7.5 15 Q6.6 9.4 1 8.5 Q6.6 7.6 7.5 2 Z" fill="#c0e4ec"/><path d="M14 0.6 Q14.4 2.6 16.4 3 Q14.4 3.4 14 5.4 Q13.6 3.4 11.6 3 Q13.6 2.6 14 0.6 Z" fill="#eef8fa"/></svg>
<div class="t" style="left:623.9px;top:535.77px;font-size:8.5px;line-height:8.5px;color:#e2e2e2;font-weight:400;letter-spacing:-0.165px;text-shadow:0.3px 0 0 #e2e2e2;">AI Companion</div>
<svg class="a" style="left:700.5px;top:515px;" width="17" height="17" viewBox="0 0 17 17"><circle cx="8.5" cy="8.5" r="7.7" fill="none" stroke="#d8d8d8" stroke-width="1.1"/><circle cx="5.3" cy="8.5" r="1.05" fill="#ddd"/><circle cx="8.5" cy="8.5" r="1.05" fill="#ddd"/><circle cx="11.7" cy="8.5" r="1.05" fill="#ddd"/></svg>
<div class="t" style="left:699.3px;top:535.77px;font-size:8.5px;line-height:8.5px;color:#e2e2e2;font-weight:400;letter-spacing:0.031px;text-shadow:0.3px 0 0 #e2e2e2;">More</div>
<svg class="a" style="left:983px;top:515px;" width="18" height="18" viewBox="0 0 18 18"><path d="M8.5 1.2 H16.2 V13.5 L11.5 16.5 V4 Z" fill="none" stroke="#e0245e" stroke-width="1.1"/><path d="M8.5 1.2 L11.5 4" stroke="#e0245e" stroke-width="1.1"/><circle cx="5" cy="4" r="2.2" fill="none" stroke="#e8e8e8" stroke-width="1"/><path d="M3 7 Q1 8.5 1.5 11 M5 6.8 L7.5 9.5 L10 10 M4.5 7 L4 11 L2 16 M4.5 11 L7 13 L6.8 16.2" fill="none" stroke="#e8e8e8" stroke-width="1.1" stroke-linejoin="round"/></svg>
<div class="t" style="left:981px;top:535.77px;font-size:8.5px;line-height:8.5px;color:#e2e2e2;font-weight:400;letter-spacing:-0.434px;text-shadow:0.3px 0 0 #e2e2e2;">Leave</div>
</body></html>
